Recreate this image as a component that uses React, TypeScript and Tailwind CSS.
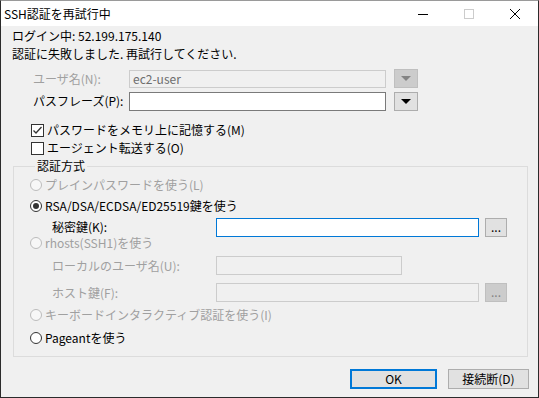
import type { ReactNode } from 'react';

function Radio({ checked, disabled }: { checked?: boolean; disabled?: boolean }) {
  return (
    <span
      className={`w-[12px] h-[12px] rounded-full border flex items-center justify-center shrink-0 ${
        disabled ? 'border-[#bcbcbc] bg-[#f7f7f7]' : 'border-[#333333] bg-white'
      }`}
    >
      {checked && <span className="w-[6px] h-[6px] rounded-full bg-[#333333]" />}
    </span>
  );
}

function Checkbox({ checked }: { checked?: boolean }) {
  return (
    <span className="w-[13px] h-[13px] border border-[#333333] bg-white flex items-center justify-center shrink-0">
      {checked && (
        <svg width="11" height="11" viewBox="0 0 11 11">
          <path d="M1.5 5.5 L4 8 L9.5 2" fill="none" stroke="#333333" strokeWidth="1.3" />
        </svg>
      )}
    </span>
  );
}

function DropButton({ disabled }: { disabled?: boolean }) {
  return (
    <div
      className={`w-[24px] h-[19px] ml-[8px] border flex items-center justify-center ${
        disabled ? 'bg-[#cccccc] border-[#bfbfbf]' : 'bg-[#e1e1e1] border-[#adadad]'
      }`}
    >
      <svg width="10" height="5" viewBox="0 0 10 5">
        <path d="M0 0 H10 L5 5 Z" fill={disabled ? '#838383' : '#000000'} />
      </svg>
    </div>
  );
}

function Browse({ disabled }: { disabled?: boolean }) {
  return (
    <div
      className={`w-[22px] h-[19px] ml-[6px] border flex items-end justify-center pb-[3px] leading-none ${
        disabled ? 'bg-[#cccccc] border-[#bfbfbf] text-[#838383]' : 'bg-[#e1e1e1] border-[#adadad] text-black'
      }`}
    >
      ...
    </div>
  );
}

function RadioRow({ children, checked, disabled, cls }: { children: ReactNode; checked?: boolean; disabled?: boolean; cls: string }) {
  return (
    <div className={`flex items-center gap-[3px] ${cls} ${disabled ? 'text-[#a0a0a0]' : 'text-black'}`}>
      <Radio checked={checked} disabled={disabled} />
      <span className="leading-[18px] whitespace-nowrap">{children}</span>
    </div>
  );
}

export default function App() {
  return (
    <div className="w-[539px] h-[398px] border border-[#2b2b2b] border-t-[#9a9a9a] flex flex-col bg-[#f0f0f0] text-[12px] text-black font-['Noto_Sans_CJK_JP',sans-serif]">
      {/* Title bar */}
      <div className="h-[25px] bg-white flex items-center shrink-0">
        <span className="pl-[3px] flex-1 leading-[18px]">SSH認証を再試行中</span>
        <div className="flex h-full">
          <div className="w-[46px] flex items-center justify-center">
            <svg width="10" height="10" viewBox="0 0 10 10">
              <path d="M0 5.5 H10" stroke="#000" strokeWidth="1" />
            </svg>
          </div>
          <div className="w-[46px] flex items-center justify-center">
            <svg width="10" height="10" viewBox="0 0 10 10">
              <rect x="0.5" y="0.5" width="9" height="9" fill="none" stroke="#cccccc" strokeWidth="1" />
            </svg>
          </div>
          <div className="w-[46px] flex items-center justify-center">
            <svg width="10" height="10" viewBox="0 0 10 10">
              <path d="M0 0 L10 10 M10 0 L0 10" stroke="#000" strokeWidth="1" />
            </svg>
          </div>
        </div>
      </div>

      {/* Body */}
      <div className="flex-1 flex flex-col pl-[11px] pr-[10px]">
        <div className="h-[18px] mt-[1px] leading-[18px]">ログイン中: 52.199.175.140</div>
        <div className="h-[18px] leading-[18px]">認証に失敗しました. 再試行してください.</div>

        <div className="h-[19px] mt-[6px] flex items-center">
          <span className="w-[96px] ml-[21px] text-[#a0a0a0] leading-[18px]">ユーザ名(N):</span>
          <div className="w-[257px] h-[18px] border border-[#cccccc] bg-[#f0f0f0] flex items-center pl-[3px] text-[#6d6d6d] leading-[16px]">
            ec2-user
          </div>
          <DropButton disabled />
        </div>

        <div className="h-[20px] mt-[3px] flex items-center">
          <span className="w-[96px] ml-[21px] leading-[18px]">パスフレーズ(P):</span>
          <div className="w-[257px] h-[19px] border border-[#7a7a7a] bg-white" />
          <DropButton />
        </div>

        <div className="h-[18px] mt-[10px] flex items-center gap-[3px] ml-[19px]">
          <Checkbox checked />
          <span className="leading-[18px]">パスワードをメモリ上に記憶する(M)</span>
        </div>
        <div className="h-[18px] flex items-center gap-[3px] ml-[19px]">
          <Checkbox />
          <span className="leading-[18px]">エージェント転送する(O)</span>
        </div>

        <fieldset className="ml-[1px] border border-[#dcdcdc] pl-[16px] pb-[8px] flex flex-col">
          <legend className="ml-[5px] px-[2px] leading-[18px]">認証方式</legend>
          <RadioRow cls="h-[20px]" disabled>プレインパスワードを使う(L)</RadioRow>
          <RadioRow cls="h-[20px] mt-[1px]" checked>RSA/DSA/ECDSA/ED25519鍵を使う</RadioRow>
          <div className="h-[20px] mt-[1px] flex items-center">
            <span className="w-[164px] ml-[22px] leading-[18px]">秘密鍵(K):</span>
            <div className="w-[263px] h-[19px] border border-[#0078d7] bg-white" />
            <Browse />
          </div>
          <RadioRow cls="h-[12px]" disabled>rhosts(SSH1)を使う</RadioRow>
          <div className="h-[19px] mt-[7px] flex items-center text-[#a0a0a0]">
            <span className="w-[164px] ml-[22px] leading-[18px]">ローカルのユーザ名(U):</span>
            <div className="w-[186px] h-[19px] border border-[#cccccc] bg-[#f0f0f0]" />
          </div>
          <div className="h-[19px] mt-[8px] flex items-center text-[#a0a0a0]">
            <span className="w-[164px] ml-[22px] leading-[18px]">ホスト鍵(F):</span>
            <div className="w-[263px] h-[19px] border border-[#cccccc] bg-[#f0f0f0]" />
            <Browse disabled />
          </div>
          <RadioRow cls="h-[20px] mt-[3px]" disabled>キーボードインタラクティブ認証を使う(I)</RadioRow>
          <RadioRow cls="h-[20px] mt-[3px]">Pageantを使う</RadioRow>
        </fieldset>

        <div className="flex justify-end mt-[12px] gap-[11px] -mr-[1px]">
          <div className="w-[87px] h-[20px] border-2 border-[#0078d7] bg-[#e1e1e1] flex items-center justify-center leading-[16px]">
            OK
          </div>
          <div className="w-[81px] h-[20px] border border-[#adadad] bg-[#e1e1e1] flex items-center justify-center leading-[18px]">
            接続断(D)
          </div>
        </div>
      </div>
    </div>
  );
}
